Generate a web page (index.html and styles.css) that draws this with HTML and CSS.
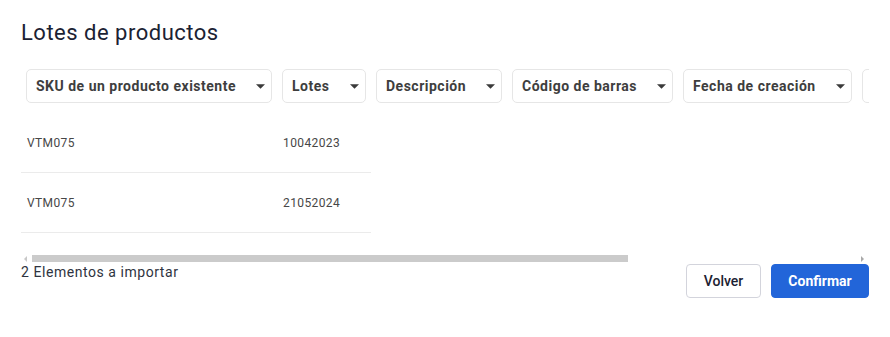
FILE: index.html
```html
<!DOCTYPE html>
<html lang="es">
<head>
<meta charset="utf-8">
<title>Lotes de productos</title>
<link rel="stylesheet" href="styles.css">
</head>
<body>
<main class="page">
  <h1 class="title">Lotes de productos</h1>
  <div class="table-wrap">
    <div class="table">
      <div class="head-row">
        <div class="head-cell c1"><div class="select"><span>SKU de un producto existente</span><svg class="caret" viewBox="0 0 10 5" width="9" height="5"><path d="M0 0h10L5 5z"/></svg></div></div>
        <div class="head-cell c2"><div class="select"><span>Lotes</span><svg class="caret" viewBox="0 0 10 5" width="9" height="5"><path d="M0 0h10L5 5z"/></svg></div></div>
        <div class="head-cell c3"><div class="select"><span>Descripción</span><svg class="caret" viewBox="0 0 10 5" width="9" height="5"><path d="M0 0h10L5 5z"/></svg></div></div>
        <div class="head-cell c4"><div class="select"><span>Código de barras</span><svg class="caret" viewBox="0 0 10 5" width="9" height="5"><path d="M0 0h10L5 5z"/></svg></div></div>
        <div class="head-cell c5"><div class="select"><span>Fecha de creación</span><svg class="caret" viewBox="0 0 10 5" width="9" height="5"><path d="M0 0h10L5 5z"/></svg></div></div>
        <div class="head-cell c6"><div class="select select-clipped"><span>Fecha de vencimiento</span><svg class="caret" viewBox="0 0 10 5" width="9" height="5"><path d="M0 0h10L5 5z"/></svg></div></div>
      </div>
      <div class="row">
        <div class="cell c1">VTM075</div>
        <div class="cell c2">10042023</div>
      </div>
      <div class="row">
        <div class="cell c1">VTM075</div>
        <div class="cell c2">21052024</div>
      </div>
    </div>
  </div>
  <div class="scrollbar">
    <span class="arrow arrow-left"></span>
    <span class="thumb"></span>
    <span class="arrow arrow-right"></span>
  </div>
  <div class="footer">
    <span class="count">2 Elementos a importar</span>
    <div class="actions">
      <button class="btn btn-secondary" type="button">Volver</button>
      <button class="btn btn-primary" type="button">Confirmar</button>
    </div>
  </div>
</main>
</body>
</html>
```

FILE: styles.css
```css
* { box-sizing: border-box; }
html, body { margin: 0; padding: 0; background: #ffffff; }
body { font-family: Roboto, "Liberation Sans", Arial, sans-serif; color: #1c2232; }

.page {
  width: 890px;
  padding: 20px 21px 0 21px;
}

.title {
  margin: 0;
  font-size: 22px;
  line-height: 25px;
  font-weight: 400;
  color: #1b2233;
  letter-spacing: 0.5px;
}

.table-wrap {
  margin-top: 19px;
  width: 848px;
  overflow: hidden;
}

.table { width: max-content; }

.head-row { display: flex; }

.head-cell { padding: 5px; flex: none; }
.c1 { width: 256px; }
.c2 { width: 94px; }
.c3 { width: 136px; }
.c4 { width: 171px; }
.c5 { width: 179px; }
.c6 { width: 190px; }

.select {
  height: 34px;
  border: 1px solid #e6e6e6;
  border-radius: 5px;
  display: flex;
  align-items: center;
  justify-content: space-between;
  padding: 0 6px 0 9px;
  font-size: 14px;
  font-weight: 700;
  color: #3e3e3e;
  letter-spacing: 0.5px;
  white-space: nowrap;
}

.select-clipped span { visibility: hidden; }
.select-clipped .caret { visibility: hidden; }

.caret { fill: #3a3a3a; flex: none; margin-top: 1px; }

.row {
  display: flex;
  width: 350px;
  height: 60px;
  border-bottom: 1px solid #ebebeb;
}
.head-row + .row { margin-top: 5px; }

.cell {
  flex: none;
  display: flex;
  align-items: center;
  padding-left: 6px;
  font-size: 12px;
  letter-spacing: 0.4px;
  color: #474747;
}

.scrollbar {
  margin-top: 19px;
  width: 848px;
  height: 12px;
  position: relative;
  display: flex;
  align-items: flex-start;
}

.thumb {
  display: block;
  margin-top: 3px;
  margin-left: 11px;
  width: 596px;
  height: 7px;
  background: #cbcbcb;
}

.arrow {
  position: absolute;
  top: 4px;
  width: 0;
  height: 0;
  border-top: 3px solid transparent;
  border-bottom: 3px solid transparent;
}
.arrow-left { left: 3px; border-right: 3px solid #c8c8c8; }
.arrow-right { right: 5px; border-left: 3px solid #a9a9a9; }

.footer {
  display: flex;
  justify-content: space-between;
  align-items: flex-start;
  width: 848px;
}

.count {
  font-size: 14px;
  line-height: 17px;
  color: #2e3340;
  letter-spacing: 0.55px;
}

.actions { display: flex; gap: 10px; }

.btn {
  height: 34px;
  border-radius: 4px;
  font-family: Roboto, "Liberation Sans", Arial, sans-serif;
  font-size: 14px;
  padding: 0 16px;
  cursor: pointer;
}

.btn-secondary {
  width: 75px;
  background: #ffffff;
  border: 1px solid #d3d4dc;
  color: #1c2232;
  font-weight: 500;
}

.btn-primary {
  width: 98px;
  background: #2265d9;
  border: 1px solid #2265d9;
  color: #ffffff;
  font-weight: 700;
}
```
